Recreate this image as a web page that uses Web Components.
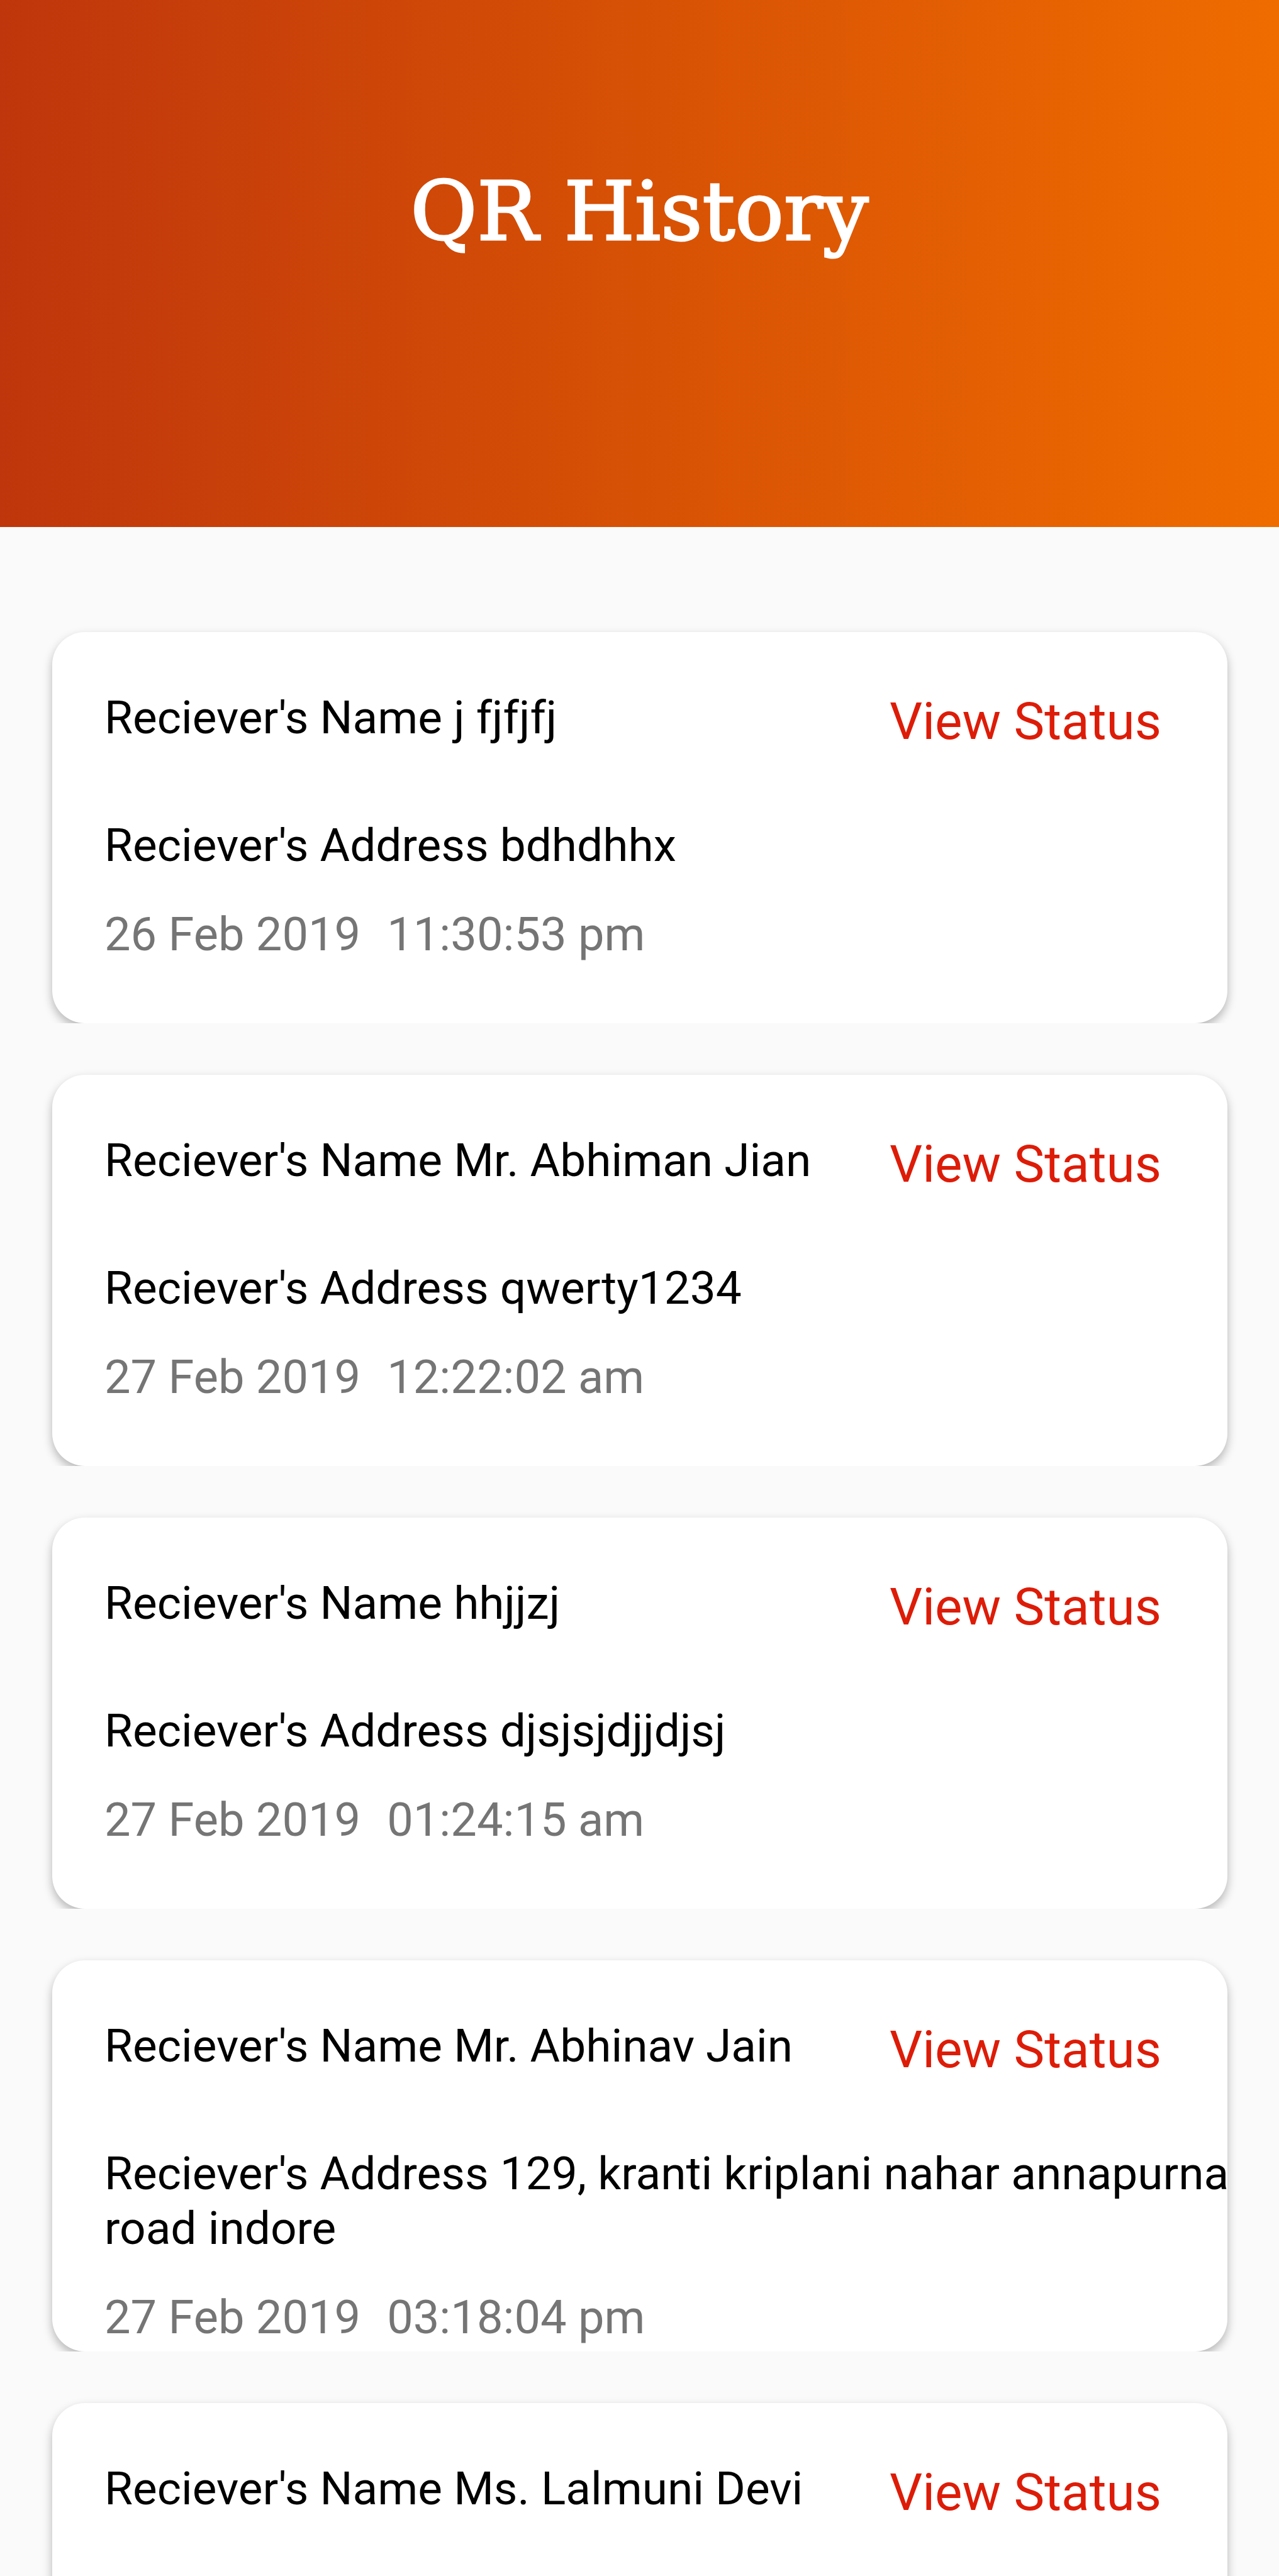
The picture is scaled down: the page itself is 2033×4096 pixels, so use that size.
<!DOCTYPE html>
<html lang="en">
<head>
<meta charset="utf-8">
<meta name="viewport" content="width=device-width, initial-scale=1">
<title>QR History</title>
<style>
  html, body { margin: 0; height: 100%; }
  body { background: #fafafa; font-family: Roboto, "Liberation Sans", sans-serif; color: #000; }
</style>
</head>
<body>
<history-screen>
  <history-header slot="header">QR History</history-header>
  <history-card>
    <span slot="name">Reciever's Name j fjfjfj</span>
    <span slot="address">Reciever's Address bdhdhhx</span>
    <time slot="date">26 Feb 2019</time>
    <time slot="time">11:30:53 pm</time>
  </history-card>
  <history-card>
    <span slot="name">Reciever's Name Mr. Abhiman Jian</span>
    <span slot="address">Reciever's Address qwerty1234</span>
    <time slot="date">27 Feb 2019</time>
    <time slot="time">12:22:02 am</time>
  </history-card>
  <history-card>
    <span slot="name">Reciever's Name hhjjzj</span>
    <span slot="address">Reciever's Address djsjsjdjjdjsj</span>
    <time slot="date">27 Feb 2019</time>
    <time slot="time">01:24:15 am</time>
  </history-card>
  <history-card>
    <span slot="name">Reciever's Name Mr. Abhinav Jain</span>
    <span slot="address">Reciever's Address 129, kranti kriplani nahar annapurna road indore</span>
    <time slot="date">27 Feb 2019</time>
    <time slot="time">03:18:04 pm</time>
  </history-card>
  <history-card>
    <span slot="name">Reciever's Name Ms. Lalmuni Devi</span>
  </history-card>
</history-screen>

<script>
class HistoryScreen extends HTMLElement {
  constructor() {
    super();
    this.attachShadow({ mode: "open" }).innerHTML = `
      <style>
        :host { display: flex; flex-direction: column; height: 100vh; overflow: hidden; }
        main {
          flex: 1; min-height: 0; overflow: hidden;
          display: flex; flex-direction: column; gap: 82px;
          padding: 167px 82px 0 83px;
        }
      </style>
      <slot name="header"></slot>
      <main><slot></slot></main>`;
  }
}

class HistoryHeader extends HTMLElement {
  constructor() {
    super();
    this.attachShadow({ mode: "open" }).innerHTML = `
      <style>
        :host { display: block; flex: none; }
        header {
          box-sizing: border-box; height: 838px; padding-top: 256px;
          background: linear-gradient(90deg, #bf360c, #d75105 50%, #ef6c00);
        }
        h1 {
          margin: 0; text-align: center; color: #fff;
          font: 400 129px/160px "DejaVu Serif", "Liberation Serif", serif;
          -webkit-text-stroke: 3px #fff;
        }
      </style>
      <header><h1><slot></slot></h1></header>`;
  }
}

class HistoryCard extends HTMLElement {
  constructor() {
    super();
    this.attachShadow({ mode: "open" }).innerHTML = `
      <style>
        /* the row cuts the card's shadow off along its bottom edge */
        :host { display: block; flex: none; clip-path: inset(-24px -40px 0 -40px); }
        article {
          box-sizing: border-box; height: 622px; padding: 93px 83px 0;
          border-radius: 52px; background: #fff; overflow: hidden;
          box-shadow: 0 7px 15px rgba(0, 0, 0, .28);
          font-size: 73px; line-height: 87px;
        }
        .top { display: flex; justify-content: space-between; align-items: flex-start; padding-right: 22px; }
        p, ::slotted(*) { display: block; margin: 0; }
        /* the address may run on under the card's right edge */
        .address { margin: 105px -164px 0 0; }
        .date { display: flex; gap: 42px; margin-top: 54px; font-size: 74px; color: #757575; }
        button {
          border: 0; padding: 0; margin: 0; background: none; cursor: pointer;
          font-family: inherit; font-size: 82px; line-height: 98px; color: #dd1c08;
        }
      </style>
      <article>
        <div class="top">
          <slot name="name"></slot>
          <button type="button">View Status</button>
        </div>
        <p class="address"><slot name="address"></slot></p>
        <div class="date"><slot name="date"></slot><slot name="time"></slot></div>
      </article>`;
  }
}

customElements.define("history-screen", HistoryScreen);
customElements.define("history-header", HistoryHeader);
customElements.define("history-card", HistoryCard);
</script>
</body>
</html>
